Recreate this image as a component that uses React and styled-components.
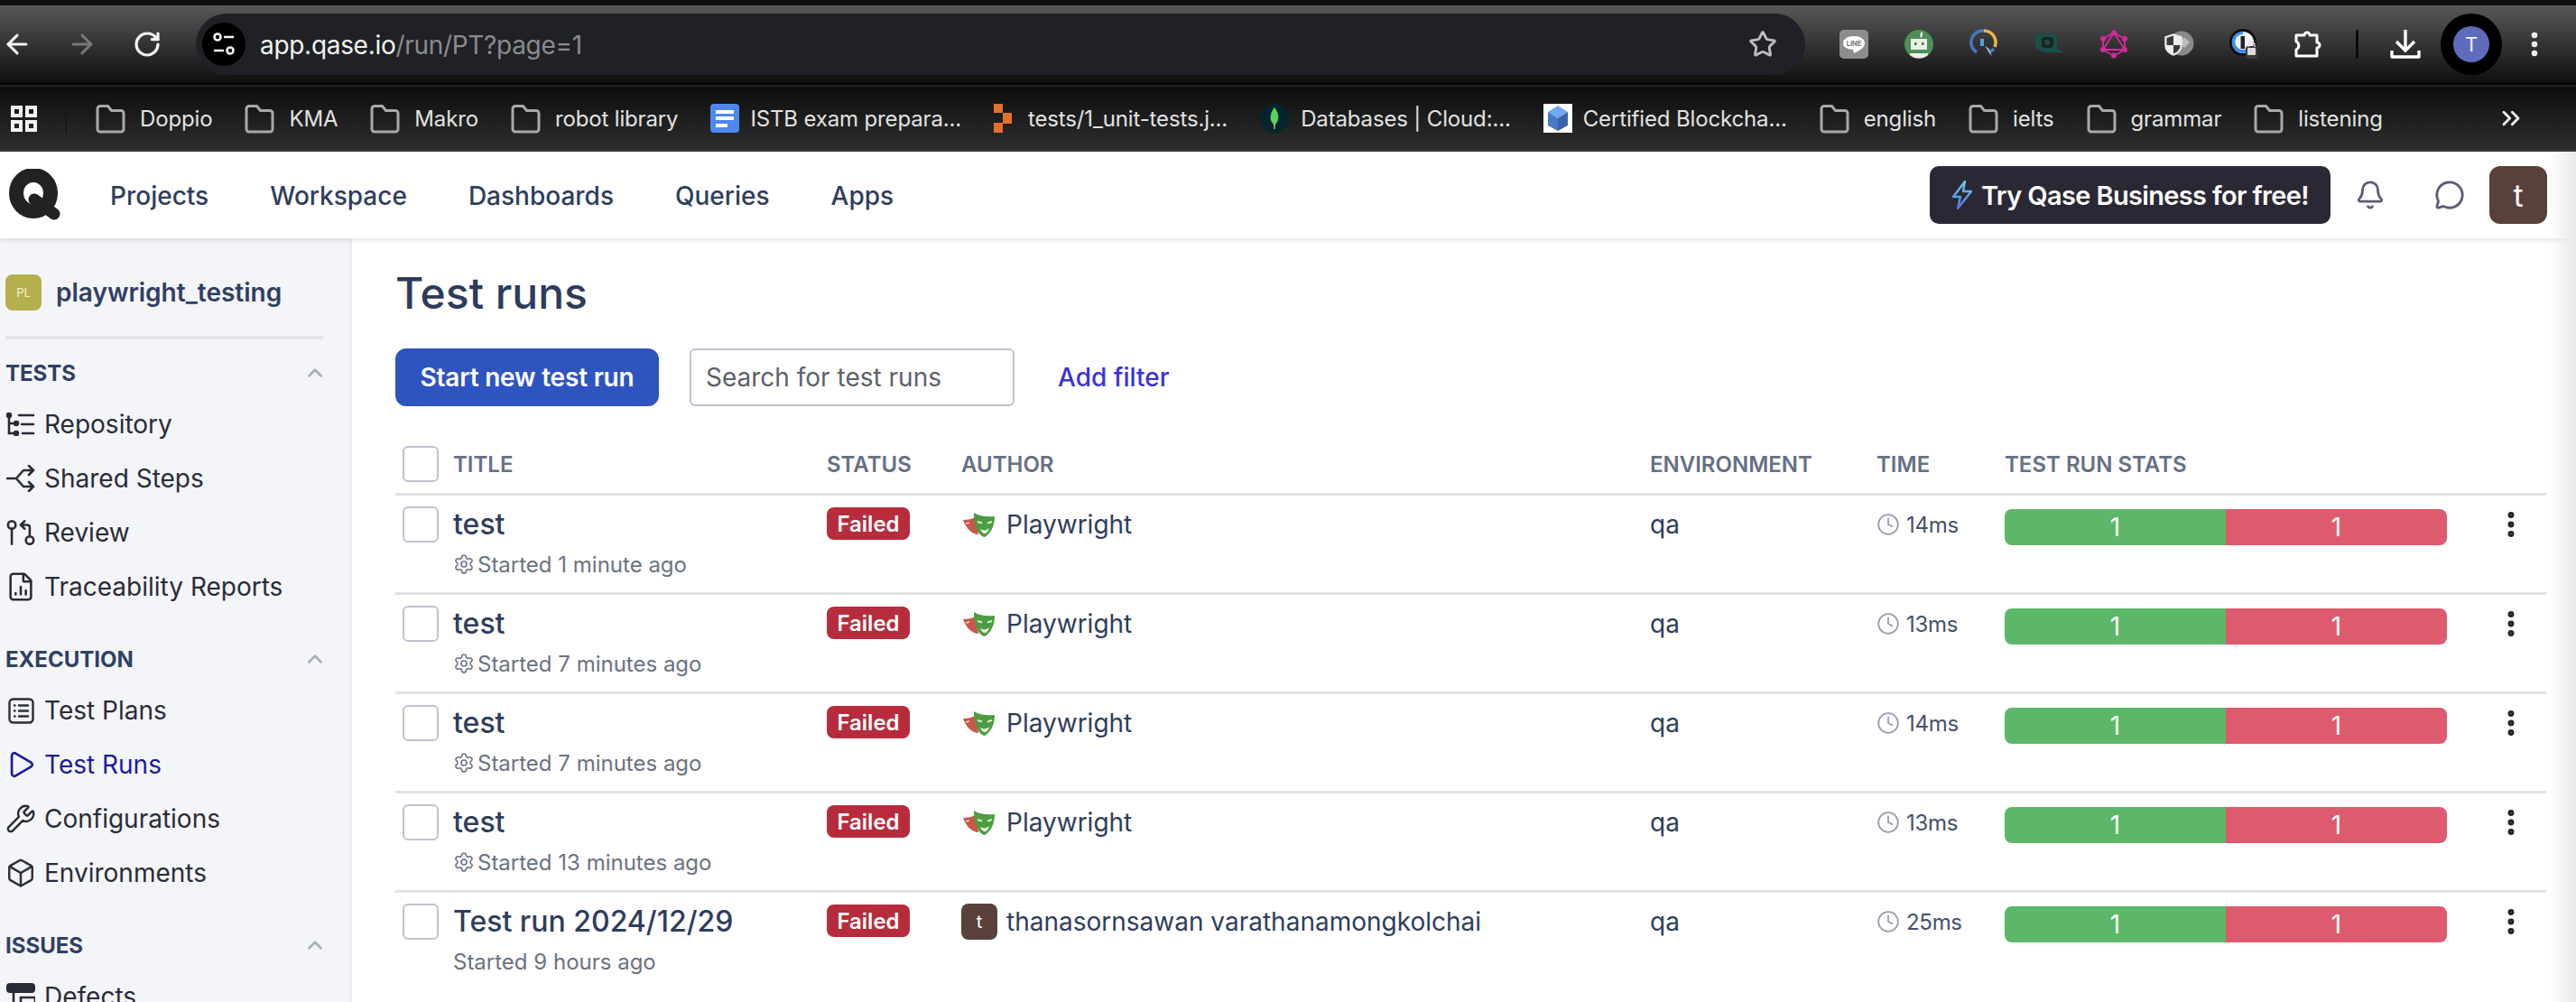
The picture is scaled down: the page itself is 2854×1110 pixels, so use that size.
import React from 'react';
import styled, { createGlobalStyle } from 'styled-components';
import {
  ArrowLeft,
  ArrowRight,
  RotateCw,
  Star,
  EllipsisVertical,
  ChevronsRight,
  Bell,
  MessageCircle,
  ChevronUp,
  GitPullRequestArrow,
  FileChartColumn,
  Play,
  Wrench,
  Box,
  Settings,
  Clock,
} from 'lucide-react';

const GlobalStyle = createGlobalStyle`
  html, body {
    margin: 0;
    padding: 0;
    height: 1110px;
    overflow: hidden;
    background: #fff;
    font-family: Inter, "Liberation Sans", sans-serif;
  }
  * { box-sizing: border-box; }
`;

const Page = styled.div`
  position: relative;
  width: 2854px;
  height: 1110px;
  overflow: hidden;
  display: flex;
  flex-direction: column;
`;

/* browser chrome */
const TopEdge = styled.div`
  height: 6px;
  background: #0f0f0f;
`;

const Toolbar = styled.div`
  height: 86px;
  display: flex;
  align-items: center;
  padding-left: 5px;
  background: linear-gradient(#585858, #0f0f0f);
`;

const NavButton = styled.div`
  width: 72px;
  display: flex;
  justify-content: center;
  color: ${props => (props.dim ? '#777' : '#f2f2f2')};
  margin-left: ${props => props.offset || 0}px;
`;

const Omnibox = styled.div`
  width: 1783px;
  height: 68px;
  margin-left: 18px;
  margin-right: 18px;
  border-radius: 34px;
  background: #202126;
  display: flex;
  align-items: center;
  padding: 0 31px 0 7px;
`;

const SiteInfo = styled.div`
  width: 48px;
  height: 48px;
  border-radius: 50%;
  background: #000;
  display: flex;
  align-items: center;
  justify-content: center;
  margin-right: 16px;
`;

const Url = styled.div`
  flex: 1;
  font-size: 28px;
  letter-spacing: -0.3px;
  color: #f4f4f4;
  padding-top: 2px;
  span { color: #8b8b8d; }
`;

const ExtButton = styled.div`
  width: 72px;
  height: 48px;
  display: flex;
  align-items: center;
  justify-content: center;
`;

const ToolbarDivider = styled.div`
  width: 3px;
  height: 32px;
  border-radius: 2px;
  background: #0a0a0a;
  margin: 0 16px;
`;

const ProfileRing = styled.div`
  width: 68px;
  height: 68px;
  margin-left: 3px;
  border-radius: 50%;
  background: #000;
  display: flex;
  align-items: center;
  justify-content: center;
`;

const ProfileDot = styled.div`
  width: 40px;
  height: 40px;
  border-radius: 50%;
  background: #5f6bbb;
  color: #f2f2f8;
  font-size: 22px;
  display: flex;
  align-items: center;
  justify-content: center;
`;

const ChromeGap = styled.div`
  height: 4px;
  background: linear-gradient(#000 50%, #222 50%);
`;

const BookmarkBar = styled.div`
  height: 72px;
  display: flex;
  align-items: center;
  padding-left: 12px;
  color: #e2e2e2;
  background: linear-gradient(#0d0d0d, #2e2e2e);
  border-bottom: 2px solid #3a3a3a;
`;

const BookmarkSep = styled.div`
  width: 2px;
  height: 32px;
  background: #171717;
  margin: 0 32px 0 31px;
`;

const Bookmark = styled.div`
  display: flex;
  align-items: center;
  gap: ${props => props.gap}px;
  margin-right: 36px;
  font-size: 24px;
  white-space: nowrap;
  letter-spacing: -0.15px;
`;

const BookmarkMore = styled.div`
  margin-left: auto;
  margin-right: 56px;
  display: flex;
  color: #eee;
`;

/* app header */
const Header = styled.header`
  position: relative;
  z-index: 1;
  height: 96px;
  display: flex;
  align-items: center;
  padding: 0 32px 0 10px;
  background: #fff;
  box-shadow: 0 2px 6px rgba(0, 0, 0, 0.12);
`;

const TopNav = styled.nav`
  display: flex;
  gap: 68px;
  margin-left: 54px;
  padding-top: 2px;
  flex: 1;
`;

const TopNavItem = styled.div`
  font-size: 28px;
  font-weight: 500;
  color: #2f3d5c;
`;

const TryButton = styled.div`
  width: 444px;
  height: 64px;
  border-radius: 10px;
  background: #2a2835;
  color: #fff;
  font-size: 29px;
  font-weight: 600;
  letter-spacing: -0.65px;
  display: flex;
  align-items: center;
  gap: 9px;
  padding-left: 24px;
`;

const HeaderIcon = styled.div`
  width: 88px;
  display: flex;
  justify-content: center;
  color: #5c5c78;
`;

const UserAvatar = styled.div`
  width: ${props => props.size}px;
  height: ${props => props.size}px;
  border-radius: ${props => props.radius}px;
  background: #57413a;
  color: #fff;
  font-size: ${props => props.fontSize}px;
  display: flex;
  align-items: center;
  justify-content: center;
  flex-shrink: 0;
`;

const Body = styled.div`
  flex: 1;
  display: flex;
  min-height: 0;
`;

/* sidebar */
const Sidebar = styled.aside`
  width: 390px;
  flex-shrink: 0;
  padding: 40px 32px 0 6px;
  background: #f4f5f8;
  box-shadow: inset -5px 0 5px -4px rgba(0, 0, 0, 0.05);
`;

const ProjectRow = styled.div`
  display: flex;
  align-items: center;
  gap: 16px;
  height: 40px;
`;

const ProjectBadge = styled.div`
  width: 40px;
  height: 40px;
  border-radius: 8px;
  background: #b5b04e;
  color: #f1f0d4;
  font-size: 13px;
  display: flex;
  align-items: center;
  justify-content: center;
`;

const ProjectName = styled.div`
  font-size: 28px;
  font-weight: 600;
  color: #2f4063;
`;

const SidebarRule = styled.div`
  height: 4px;
  background: #e6e6e8;
  margin: 28px 0 10px;
`;

const Section = styled.section`
  margin-bottom: 23px;
`;

const SectionHead = styled.div`
  height: 54px;
  display: flex;
  align-items: center;
  justify-content: space-between;
  font-size: 24px;
  font-weight: 700;
  color: #2f4063;
  svg { color: #a9afbd; margin-right: -4px; }
`;

const SideItem = styled.div`
  height: 60px;
  display: flex;
  align-items: center;
  gap: 9px;
  font-size: 28px;
  white-space: nowrap;
  color: ${props => (props.active ? '#1f1a9a' : '#2a2b38')};
`;

const SideIcon = styled.div`
  width: 34px;
  display: flex;
  justify-content: center;
`;

/* main content */
const Main = styled.main`
  flex: 1;
  padding: 37px 33px 0 48px;
  min-width: 0;
`;

const Title = styled.h1`
  margin: 0 0 37px;
  font-size: 48px;
  line-height: 48px;
  font-weight: 500;
  color: #2e3b5a;
`;

const Controls = styled.div`
  display: flex;
  align-items: center;
  height: 64px;
  margin-bottom: 30px;
`;

const PrimaryButton = styled.div`
  width: 292px;
  height: 64px;
  border-radius: 12px;
  background: #2e54c0;
  color: #fff;
  font-size: 28px;
  font-weight: 600;
  letter-spacing: -0.2px;
  display: flex;
  align-items: center;
  justify-content: center;
  margin-right: 34px;
`;

const SearchBox = styled.div`
  width: 360px;
  height: 64px;
  border: 2px solid #c2c2d0;
  border-radius: 6px;
  background: #fff;
  color: #5d5f6b;
  font-size: 28px;
  display: flex;
  align-items: center;
  padding-left: 16px;
  margin-right: 48px;
`;

const FilterLink = styled.div`
  color: #3a33d6;
  font-size: 28px;
  font-weight: 500;
`;

const columns = '64px 414px 149px 763px 251px 142px 490px 110px';

const HeadRow = styled.div`
  display: grid;
  grid-template-columns: ${columns};
  align-items: center;
  height: 69px;
  padding-top: 2px;
  border-bottom: 3px solid #e2e3e8;
  font-size: 24px;
  font-weight: 600;
  color: #667085;
`;

const RunRow = styled.div`
  display: grid;
  grid-template-columns: ${columns};
  align-items: start;
  height: 110px;
  padding-top: 12px;
  border-bottom: 3px solid #e2e3e8;
  &:last-child { border-bottom: none; }
`;

const CheckCell = styled.div`
  padding-left: 8px;
`;

const CheckBox = styled.div`
  width: 40px;
  height: 40px;
  border: 2px solid #c2c2d0;
  border-radius: 6px;
  background: #fff;
`;

const RunTitle = styled.div`
  font-size: 32px;
  line-height: 40px;
  font-weight: 500;
  color: #2f3d5c;
`;

const RunMeta = styled.div`
  display: flex;
  align-items: center;
  gap: 3px;
  margin-top: 9px;
  height: 30px;
  font-size: 24px;
  color: #6b7280;
`;

const StatusBadge = styled.div`
  width: 92px;
  height: 36px;
  margin-top: 1px;
  border-radius: 8px;
  background: #b72c3d;
  color: #fff;
  font-size: 24px;
  font-weight: 600;
  display: flex;
  align-items: center;
  justify-content: center;
`;

const AuthorCell = styled.div`
  display: flex;
  align-items: center;
  gap: 10px;
  height: 40px;
  font-size: 28px;
  color: #2f3d5c;
`;

const EnvCell = styled.div`
  font-size: 28px;
  line-height: 40px;
  color: #2f3d5c;
`;

const TimeCell = styled.div`
  display: flex;
  align-items: center;
  gap: 7px;
  height: 40px;
  font-size: 24px;
  letter-spacing: -0.3px;
  color: #46506a;
  svg { color: #99a0b2; }
`;

const StatsBar = styled.div`
  display: flex;
  height: 40px;
  margin-top: 3px;
  border-radius: 8px;
  overflow: hidden;
`;

const StatsPart = styled.div`
  flex: 1;
  display: flex;
  align-items: center;
  justify-content: center;
  background: ${props => props.color};
  color: #fff;
  font-size: 28px;
`;

const ActionCell = styled.div`
  display: flex;
  justify-content: center;
  margin-left: 32px;
  width: 78px;
  height: 40px;
  align-items: center;
  color: #24242f;
`;

const EdgeShade = styled.div`
  position: absolute;
  top: 168px;
  right: 0;
  bottom: 0;
  width: 30px;
  z-index: 2;
  pointer-events: none;
  background: linear-gradient(to right, rgba(232, 232, 232, 0), #e9e9e9);
`;

/* drawings */
const FolderIcon = () => (
  <svg width="33" height="33" viewBox="0 0 33 33" fill="none" stroke="#a9a9a9" strokeWidth="3">
    <path d="M2 5.5a3 3 0 0 1 3-3h8.5l4 5H28a3 3 0 0 1 3 3V28a3 3 0 0 1-3 3H5a3 3 0 0 1-3-3z" />
  </svg>
);

const AppsIcon = () => (
  <svg width="29" height="29" viewBox="0 0 29 29" fill="none" stroke="#f2f2f2" strokeWidth="4">
    <rect x="2" y="2" width="9" height="9" />
    <rect x="18" y="2" width="9" height="9" />
    <rect x="2" y="18" width="9" height="9" />
    <rect x="18" y="18" width="9" height="9" />
  </svg>
);

const DocsIcon = () => (
  <svg width="32" height="32" viewBox="0 0 32 32">
    <rect width="32" height="32" rx="4" fill="#4f86f0" />
    <rect x="6" y="7" width="20" height="4" fill="#fff" />
    <rect x="6" y="14" width="20" height="4" fill="#fff" />
    <rect x="6" y="22" width="13" height="4" fill="#fff" />
  </svg>
);

const GitlabMark = () => (
  <svg width="20" height="32" viewBox="0 0 20 32" fill="#e56f2c">
    <rect x="0" y="0" width="10" height="10" />
    <rect x="10" y="10" width="10" height="12" />
    <rect x="0" y="21" width="10" height="11" />
  </svg>
);

const MongoIcon = () => (
  <svg width="32" height="32" viewBox="0 0 32 32">
    <ellipse cx="16" cy="16" rx="16" ry="16" fill="#05242d" />
    <path d="M16 4c4 5 5 10 4 14-1 3-3 4-4 6-1-2-3-3-4-6-1-4 0-9 4-14z" fill="#5ad35e" />
    <rect x="15.4" y="22" width="1.2" height="6" fill="#b9ecb0" />
  </svg>
);

const CubeIcon = () => (
  <svg width="32" height="32" viewBox="0 0 32 32">
    <rect width="32" height="32" fill="#fff" />
    <path d="M16 2 27 9 16 16 5 9z" fill="#73a9ee" />
    <path d="M5 9l11 7v14L5 24z" fill="#4a78c9" />
    <path d="M27 9l-11 7v14l11-6z" fill="#3962ad" />
  </svg>
);

const TuneIcon = () => (
  <svg width="26" height="30" viewBox="0 0 26 30" fill="none" stroke="#f4f4f4" strokeWidth="2.6">
    <circle cx="6" cy="7" r="3.5" />
    <path d="M13 7h11M2 22h11" />
    <circle cx="20" cy="22" r="3.5" />
  </svg>
);

const LineIcon = () => (
  <svg width="32" height="32" viewBox="0 0 32 32">
    <rect width="32" height="32" rx="5" fill="#8c8c8c" />
    <path d="M16 7c7 0 12 3.400 12 8 0 4-5 8-12 11l-1-4C8 21.500 4 19 4 15c0-4.600 5-8 12-8z" fill="#fff" />
    <text x="16" y="18" fontSize="7.500" fontWeight="700" textAnchor="middle" fill="#777" fontFamily="Inter, sans-serif">LINE</text>
  </svg>
);

const RobotIcon = () => (
  <svg width="32" height="32" viewBox="0 0 32 32">
    <circle cx="16" cy="16" r="16" fill="#4f8f58" />
    <path d="M19 2c2 2 1 6-1 7-1-2-1-5 1-7z" fill="#e8efe6" />
    <rect x="7" y="10" width="18" height="12" fill="#e9f0e6" />
    <rect x="11" y="14" width="2.500" height="3" fill="#4a7a50" />
    <rect x="19" y="14" width="2.500" height="3" fill="#4a7a50" />
    <path d="M6 26h20v2a16 16 0 0 1-20 0z" fill="#e9f0e6" />
  </svg>
);

const PxIcon = () => (
  <svg width="32" height="36" viewBox="0 0 32 36" fill="none">
    <path d="M16 3a13 13 0 0 1 12 18" stroke="#e8b552" strokeWidth="3.500" />
    <path d="M16 3A13 13 0 0 0 8 27" stroke="#4478c4" strokeWidth="3.500" />
    <path d="M21 27a13 13 0 0 0 6-4" stroke="#4478c4" strokeWidth="3.500" />
    <path d="M12 12h4v8h-4z" fill="#4aa5de" />
    <path d="M17 11l6 9M23 11l-6 9" stroke="#333" strokeWidth="2" />
    <path d="M17 20l8 12 -3-9z" fill="#a8adb4" />
  </svg>
);

const TealIcon = () => (
  <svg width="34" height="30" viewBox="0 0 34 30">
    <path d="M6 3h16l4 4v13l8 4H14c-3 0-5-1-8-3-2 0-4-2-4-4V7c0-2 2-4 4-4z" fill="#174f49" />
    <rect x="9" y="7" width="13" height="12" rx="4" fill="#202020" />
    <circle cx="15" cy="13" r="3" fill="#174f49" />
  </svg>
);

const GraphqlIcon = () => (
  <svg width="30" height="32" viewBox="0 0 30 32" fill="none" stroke="#d42a9e" strokeWidth="1.800">
    <path d="M15 3 27 10v12L15 29 3 22V10z" />
    <path d="M15 3 27 22H3z" />
    <g fill="#d42a9e" stroke="none">
      <circle cx="15" cy="3.500" r="3" />
      <circle cx="27" cy="10" r="3" />
      <circle cx="27" cy="22" r="3" />
      <circle cx="15" cy="28.500" r="3" />
      <circle cx="3" cy="22" r="3" />
      <circle cx="3" cy="10" r="3" />
    </g>
  </svg>
);

const ShieldIcon = () => (
  <svg width="34" height="30" viewBox="0 0 34 30">
    <circle cx="20" cy="14" r="13.500" fill="#8a8a8a" />
    <path d="M14 6l5 3 5-1 5 5-6 6-4-4z" fill="#bdbdbd" />
    <path d="M2 7l9-3 9 3v9c0 6-4 9-9 11C6 25 2 22 2 16z" fill="#ececec" stroke="#ececec" strokeWidth="1.500" />
    <path d="M11 5.500V16H3.500V8zM11 16h7.500c0 5-3.500 8-7.500 9.500z" fill="#3a3a3a" />
  </svg>
);

const OnePassIcon = () => (
  <svg width="32" height="34" viewBox="0 0 32 34">
    <circle cx="15" cy="15" r="15" fill="#0d0d0d" />
    <circle cx="15" cy="15" r="12" fill="#f0f4fa" />
    <path d="M15 3a12 12 0 1 0 10 18l-3-2a8.500 8.500 0 1 1-7-13z" fill="#3b8ef0" />
    <rect x="12.500" y="8" width="4.500" height="14" fill="#222" />
    <rect x="18" y="19" width="13" height="14" rx="3" fill="#3d3d3d" />
    <path d="M21 20v-2a3.500 3.500 0 0 1 7 0v2" stroke="#ddd" strokeWidth="1.500" fill="none" />
    <rect x="20" y="21" width="9" height="8" rx="1" fill="#ddd" />
  </svg>
);

const PuzzleIcon = () => (
  <svg width="34" height="32" viewBox="0 0 34 32" fill="none" stroke="#fff" strokeWidth="3" strokeLinejoin="round">
    <path d="M3 6h9a3 3 0 1 1 6 0h8v8a3 3 0 1 1 0 6v9H3v-7a5 5 0 0 0 0-9z" />
  </svg>
);

const DownloadIcon = () => (
  <svg width="34" height="34" viewBox="0 0 34 34" fill="none" stroke="#fff" strokeWidth="3.400">
    <path d="M17 1v22M7 14l10 10 10-10" />
    <path d="M2 24v7h30v-7" strokeLinejoin="round" />
  </svg>
);

const QLogo = () => (
  <svg width="58" height="58" viewBox="0 0 58 58" fill="none">
    <ellipse cx="27" cy="27" rx="19" ry="20" stroke="#222" strokeWidth="16" />
    <path d="M28 34 50 50" stroke="#222" strokeWidth="13" strokeLinecap="round" />
  </svg>
);

const BoltIcon = () => (
  <svg width="24" height="34" viewBox="0 0 24 34" fill="none" strokeWidth="2.400" strokeLinejoin="round">
    <defs>
      <linearGradient id="bolt" x1="0" y1="0" x2="0" y2="1">
        <stop offset="0" stopColor="#6fd0e0" />
        <stop offset="1" stopColor="#5a6fe0" />
      </linearGradient>
    </defs>
    <path d="M15 2 2 19h8L7 32l15-19h-9z" stroke="url(#bolt)" />
  </svg>
);

const RepoIcon = () => (
  <svg width="32" height="26" viewBox="0 0 32 26" fill="none" stroke="#2a2b38" strokeWidth="2.600" strokeLinecap="round">
    <path d="M3 3v20h8M3 12h8M14 3h16M17 13h13M18 23h12" />
    <circle cx="3" cy="3" r="2" fill="#2a2b38" />
    <circle cx="11" cy="12" r="2" fill="#2a2b38" />
    <circle cx="11" cy="23" r="2" fill="#2a2b38" />
  </svg>
);

const SharedIcon = () => (
  <svg width="32" height="30" viewBox="0 0 32 30" fill="none" stroke="#2a2b38" strokeWidth="2.600" strokeLinecap="round" strokeLinejoin="round">
    <path d="M1 15h10l8-9h11M11 15l8 9h11M25 1l5 5-5 5M25 19l5 5-5 5" />
  </svg>
);

const PlanIcon = () => (
  <svg width="29" height="29" viewBox="0 0 29 29" fill="none" stroke="#2a2b38" strokeWidth="2.400" strokeLinecap="round">
    <rect x="1.500" y="1.500" width="26" height="26" rx="4" />
    <path d="M12 8.500h10M12 14.500h10M12 20.500h10M7 8.500h.5M7 14.500h.5M7 20.500h.5" />
  </svg>
);

const DefectIcon = () => (
  <svg width="32" height="30" viewBox="0 0 32 30" fill="none">
    <rect x="0" y="0" width="32" height="11" rx="4" fill="#2a2b38" />
    <path d="M8 11v12h8M16 16h16v12H16z" stroke="#2a2b38" strokeWidth="2.600" />
  </svg>
);

const MasksIcon = () => (
  <svg width="40" height="30" viewBox="-2 -1 40 30">
    <path d="M0 9c5 0 10-1 15-4l2 20c-7 0-14-7-17-16z" fill="#c9584a" />
    <path d="M12 1c6 4 14 5 23 4 0 9-3 18-11 23C17 27 12 14 12 1z" fill="#4b9d3f" />
    <path d="M16 11l5 1.500M27 12.500l5-1.500" stroke="#dcebd6" strokeWidth="2" />
    <path d="M19 19c3 2 7 2 10-1-1 4-3 6-5 6s-4-2-5-5z" fill="#eef4e8" />
    <path d="M3 13l4-1" stroke="#f0d5cf" strokeWidth="1.600" />
  </svg>
);

const bookmarks = [
  { label: 'Doppio' },
  { label: 'KMA' },
  { label: 'Makro' },
  { label: 'robot library' },
  { label: 'ISTB exam prepara...', icon: <DocsIcon />, gap: 12 },
  { label: 'tests/1_unit-tests.j...', icon: <GitlabMark />, gap: 18 },
  { label: 'Databases | Cloud:...', icon: <MongoIcon />, gap: 13 },
  { label: 'Certified Blockcha...', icon: <CubeIcon />, gap: 12 },
  { label: 'english' },
  { label: 'ielts' },
  { label: 'grammar' },
  { label: 'listening' },
];

const extensions = [
  <LineIcon />,
  <RobotIcon />,
  <PxIcon />,
  <TealIcon />,
  <GraphqlIcon />,
  <ShieldIcon />,
  <OnePassIcon />,
  <PuzzleIcon />,
];

const sections = [
  {
    title: 'TESTS',
    items: [
      { label: 'Repository', icon: <RepoIcon /> },
      { label: 'Shared Steps', icon: <SharedIcon /> },
      { label: 'Review', icon: <GitPullRequestArrow size={36} strokeWidth={1.8} /> },
      { label: 'Traceability Reports', icon: <FileChartColumn size={34} strokeWidth={1.8} /> },
    ],
  },
  {
    title: 'EXECUTION',
    items: [
      { label: 'Test Plans', icon: <PlanIcon /> },
      { label: 'Test Runs', icon: <Play size={34} strokeWidth={1.9} />, active: true },
      { label: 'Configurations', icon: <Wrench size={34} strokeWidth={1.7} /> },
      { label: 'Environments', icon: <Box size={34} strokeWidth={1.7} /> },
    ],
  },
  {
    title: 'ISSUES',
    items: [{ label: 'Defects', icon: <DefectIcon /> }],
  },
];

const runs = [
  { title: 'test', started: 'Started 1 minute ago', time: '14ms' },
  { title: 'test', started: 'Started 7 minutes ago', time: '13ms' },
  { title: 'test', started: 'Started 7 minutes ago', time: '14ms' },
  { title: 'test', started: 'Started 13 minutes ago', time: '13ms' },
  {
    title: 'Test run 2024/12/29',
    started: 'Started 9 hours ago',
    time: '25ms',
    manual: true,
  },
];

const App = () => (
  <Page>
    <GlobalStyle />
    <TopEdge />
    <Toolbar>
      <NavButton offset={-22}>
        <ArrowLeft size={34} strokeWidth={2.2} />
      </NavButton>
      <NavButton dim>
        <ArrowRight size={34} strokeWidth={2.2} />
      </NavButton>
      <NavButton>
        <RotateCw size={32} strokeWidth={2.4} />
      </NavButton>
      <Omnibox>
        <SiteInfo>
          <TuneIcon />
        </SiteInfo>
        <Url>
          app.qase.io<span>/run/PT?page=1</span>
        </Url>
        <Star size={32} color="#bdbdbd" strokeWidth={2.2} />
      </Omnibox>
      {extensions.map((icon, i) => (
        <ExtButton key={i}>{icon}</ExtButton>
      ))}
      <ToolbarDivider />
      <ExtButton>
        <DownloadIcon />
      </ExtButton>
      <ProfileRing>
        <ProfileDot>T</ProfileDot>
      </ProfileRing>
      <ExtButton>
        <EllipsisVertical size={34} color="#f2f2f2" strokeWidth={2.6} />
      </ExtButton>
    </Toolbar>
    <ChromeGap />
    <BookmarkBar>
      <AppsIcon />
      <BookmarkSep />
      {bookmarks.map(b => (
        <Bookmark key={b.label} gap={b.gap || 16}>
          {b.icon || <FolderIcon />}
          {b.label}
        </Bookmark>
      ))}
      <BookmarkMore>
        <ChevronsRight size={32} strokeWidth={2.2} />
      </BookmarkMore>
    </BookmarkBar>
    <Header>
      <QLogo />
      <TopNav>
        {['Projects', 'Workspace', 'Dashboards', 'Queries', 'Apps'].map(n => (
          <TopNavItem key={n}>{n}</TopNavItem>
        ))}
      </TopNav>
      <TryButton>
        <BoltIcon />
        Try Qase Business for free!
      </TryButton>
      <HeaderIcon>
        <Bell size={34} strokeWidth={2} />
      </HeaderIcon>
      <HeaderIcon>
        <MessageCircle size={34} strokeWidth={2} />
      </HeaderIcon>
      <UserAvatar size={64} radius={12} fontSize={34}>
        t
      </UserAvatar>
    </Header>
    <Body>
      <Sidebar>
        <ProjectRow>
          <ProjectBadge>PL</ProjectBadge>
          <ProjectName>playwright_testing</ProjectName>
        </ProjectRow>
        <SidebarRule />
        {sections.map(s => (
          <Section key={s.title}>
            <SectionHead>
              {s.title}
              <ChevronUp size={26} strokeWidth={2.6} />
            </SectionHead>
            {s.items.map(item => (
              <SideItem key={item.label} active={item.active}>
                <SideIcon>{item.icon}</SideIcon>
                {item.label}
              </SideItem>
            ))}
          </Section>
        ))}
      </Sidebar>
      <Main>
        <Title>Test runs</Title>
        <Controls>
          <PrimaryButton>Start new test run</PrimaryButton>
          <SearchBox>Search for test runs</SearchBox>
          <FilterLink>Add filter</FilterLink>
        </Controls>
        <HeadRow>
          <CheckCell>
            <CheckBox />
          </CheckCell>
          <div>TITLE</div>
          <div>STATUS</div>
          <div>AUTHOR</div>
          <div>ENVIRONMENT</div>
          <div>TIME</div>
          <div>TEST RUN STATS</div>
          <div />
        </HeadRow>
        {runs.map((run, i) => (
          <RunRow key={i}>
            <CheckCell>
              <CheckBox />
            </CheckCell>
            <div>
              <RunTitle>{run.title}</RunTitle>
              <RunMeta>
                {!run.manual && <Settings size={24} strokeWidth={1.6} />}
                {run.started}
              </RunMeta>
            </div>
            <StatusBadge>Failed</StatusBadge>
            <AuthorCell>
              {run.manual ? (
                <UserAvatar size={40} radius={8} fontSize={20}>
                  t
                </UserAvatar>
              ) : (
                <MasksIcon />
              )}
              {run.manual ? 'thanasornsawan varathanamongkolchai' : 'Playwright'}
            </AuthorCell>
            <EnvCell>qa</EnvCell>
            <TimeCell>
              <Clock size={26} strokeWidth={1.7} />
              {run.time}
            </TimeCell>
            <StatsBar>
              <StatsPart color="#5cb868">1</StatsPart>
              <StatsPart color="#de5a6e">1</StatsPart>
            </StatsBar>
            <ActionCell>
              <EllipsisVertical size={36} strokeWidth={2.6} />
            </ActionCell>
          </RunRow>
        ))}
      </Main>
    </Body>
    <EdgeShade />
  </Page>
);

export default App;
